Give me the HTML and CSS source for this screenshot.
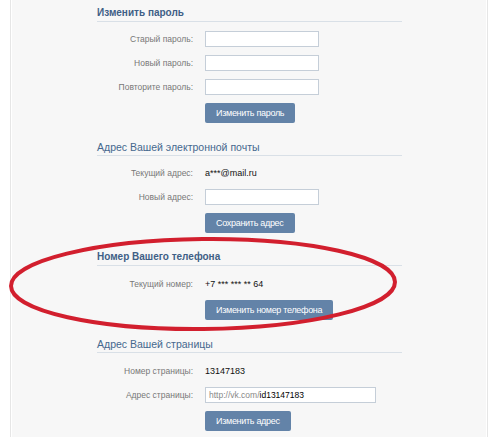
FILE: index.html
```html
<!DOCTYPE html>
<html lang="ru">
<head>
  <meta charset="UTF-8" />
  <title>Настройки</title>
  <link rel="stylesheet" href="styles.css">
</head>
<body>

<div class="panel">

  <div class="section first">
    <h2 class="section-title bold">Изменить пароль</h2>
    <div class="row r-first">
      <div class="label">Старый пароль:</div>
      <div class="field"><div class="input"></div></div>
    </div>
    <div class="row">
      <div class="label">Новый пароль:</div>
      <div class="field"><div class="input"></div></div>
    </div>
    <div class="row">
      <div class="label">Повторите пароль:</div>
      <div class="field"><div class="input"></div></div>
    </div>
    <div class="row">
      <div class="label"></div>
      <div class="field"><button class="btn">Изменить пароль</button></div>
    </div>
  </div>

  <div class="section">
    <h2 class="section-title">Адрес Вашей электронной почты</h2>
    <div class="row r-first">
      <div class="label">Текущий адрес:</div>
      <div class="field value">a***@mail.ru</div>
    </div>
    <div class="row">
      <div class="label">Новый адрес:</div>
      <div class="field"><div class="input"></div></div>
    </div>
    <div class="row">
      <div class="label"></div>
      <div class="field"><button class="btn">Сохранить адрес</button></div>
    </div>
  </div>

  <div class="section">
    <h2 class="section-title bold">Номер Вашего телефона</h2>
    <div class="row r-first wide">
      <div class="label">Текущий номер:</div>
      <div class="field value">+7 *** *** ** 64</div>
    </div>
    <div class="row">
      <div class="label"></div>
      <div class="field"><button class="btn">Изменить номер телефона</button></div>
    </div>
  </div>

  <div class="section">
    <h2 class="section-title">Адрес Вашей страницы</h2>
    <div class="row r-first wide">
      <div class="label">Номер страницы:</div>
      <div class="field value">13147183</div>
    </div>
    <div class="row">
      <div class="label">Адрес страницы:</div>
      <div class="field"><div class="input long"><span class="muted">http://vk.com/</span>id13147183</div></div>
    </div>
    <div class="row">
      <div class="label"></div>
      <div class="field"><button class="btn">Изменить адрес</button></div>
    </div>
  </div>

  <!-- пометка поверх скриншота -->
  <svg class="mark" width="400" height="104" viewBox="0 0 400 104">
    <ellipse cx="198" cy="50" rx="192" ry="45" fill="none" stroke="#d21f2e" stroke-width="4" transform="rotate(-0.6 198 50)"/>
  </svg>

</div>

</body>
</html>
```

FILE: styles.css
```css
:root {
  --blue: #45688e;
  --btn: #6383a8;
  --label: #777;
  --line: #d9e0e7;
}

body {
  margin: 0;
  background: #fff;
  font-family: "Liberation Sans", Arial, sans-serif;
  font-size: 8.5px;
  color: #000;
}

.panel {
  position: relative;
  margin-left: 10px;
  width: 478px;
  height: 437px;
  box-sizing: border-box;
  background: #f7f7f7;
  border-left: 1px solid #e6e6e6;
  border-right: 1px solid #e6e6e6;
  box-shadow: inset 1px 0 0 #fff, inset -1px 0 0 #fff;
  padding: 0 85px 0 86px;
}

.section {
  margin-top: 17px;
}

.section.first {
  margin-top: 0;
  padding-top: 6px;
}

.section-title {
  margin: 0;
  font-size: 10.5px;
  line-height: 14px;
  font-weight: normal;
  color: var(--blue);
  border-bottom: 1px solid var(--line);
  padding-bottom: 1px;
}

.section-title.bold {
  font-weight: bold;
  font-size: 10px;
  color: #3f5f86;
}

.row {
  display: flex;
  align-items: center;
  gap: 12px;
  margin-top: 8px;
  min-height: 16px;
}

.row.r-first {
  margin-top: 9px;
}

.row.wide {
  margin-top: 10px;
}

.label {
  width: 96px;
  flex: 0 0 96px;
  text-align: right;
  color: var(--label);
  white-space: nowrap;
}

.field.value {
  font-size: 9px;
  color: #111;
}

.input {
  width: 114px;
  height: 16px;
  box-sizing: border-box;
  background: #fff;
  border: 1px solid #c5ced8;
  line-height: 14px;
  padding-left: 3px;
  font-size: 8.5px;
}

.input.long {
  width: 171px;
}

.muted {
  color: #888;
}

.btn {
  display: block;
  height: 20px;
  padding: 0 11px;
  border: none;
  border-radius: 2px;
  background: var(--btn);
  color: #fff;
  font-family: inherit;
  font-size: 9px;
  letter-spacing: -0.3px;
  line-height: 20px;
}

.mark {
  position: absolute;
  left: -6px;
  top: 234px;
}
```
